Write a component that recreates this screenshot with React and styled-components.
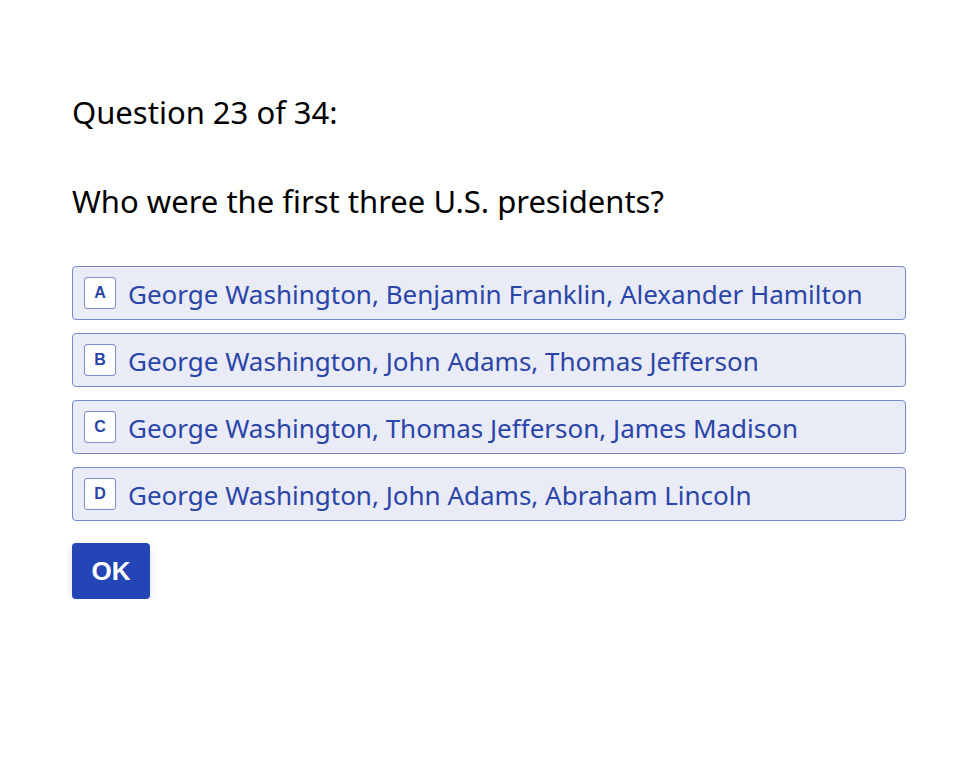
import React from 'react'
import styled, { createGlobalStyle } from 'styled-components';

const Global = createGlobalStyle`
  html, body {
    margin: 0;
    padding: 0;
    background: #ffffff;
  }
`;

const Page = styled.div`
  padding: 92px 66px 0 72px;
  font-family: "Segoe UI", "Noto Sans", sans-serif;
  color: #000;
`;

const Counter = styled.div`
  font-size: 31px;
  line-height: 40px;
  margin-bottom: 49px;
`;

const Prompt = styled.div`
  font-size: 31px;
  line-height: 40px;
  margin-bottom: 45px;
`;

const Options = styled.div`
  display: flex;
  flex-direction: column;
  gap: 13px;
`;

const Option = styled.div`
  display: flex;
  align-items: center;
  gap: 12px;
  height: 54px;
  box-sizing: border-box;
  padding: 0 11px;
  background: #e9ebf6;
  border: 1px solid #7489cf;
  border-radius: 4px;
  color: #2a45a8;
  font-size: 26px;
  cursor: pointer;
`;

const Label = styled.span`
  padding-top: 2px;
`;

const Key = styled.span`
  display: flex;
  align-items: center;
  justify-content: center;
  width: 32px;
  height: 32px;
  box-sizing: border-box;
  background: #fff;
  border: 1px solid #7a8dcc;
  border-radius: 3px;
  font-family: "Liberation Sans", Arial, sans-serif;
  font-weight: bold;
  font-size: 16px;
  color: #2a45a8;
`;

const OkButton = styled.button`
  margin-top: 22px;
  width: 78px;
  height: 56px;
  border: none;
  border-radius: 4px;
  background: #2445b5;
  color: #fff;
  font-family: "Liberation Sans", Arial, sans-serif;
  font-weight: bold;
  font-size: 26px;
  box-shadow: 0 3px 10px rgba(0, 0, 0, 0.12);
  cursor: pointer;
`;

const answers = [
  ['A', 'George Washington, Benjamin Franklin, Alexander Hamilton'],
  ['B', 'George Washington, John Adams, Thomas Jefferson'],
  ['C', 'George Washington, Thomas Jefferson, James Madison'],
  ['D', 'George Washington, John Adams, Abraham Lincoln'],
];

export default function App() {
  return (
    <Page>
      <Global />
      <Counter>Question 23 of 34:</Counter>
      <Prompt>Who were the first three U.S. presidents?</Prompt>
      <Options>
        {answers.map(([k, text]) => (
          <Option key={k}>
            <Key>{k}</Key>
            <Label>{text}</Label>
          </Option>
        ))}
      </Options>
      <OkButton>OK</OkButton>
    </Page>
  )
}
